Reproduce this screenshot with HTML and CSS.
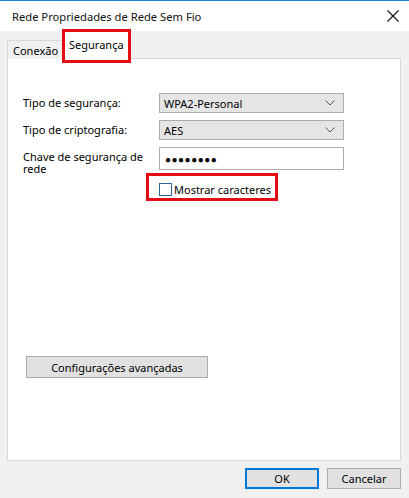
FILE: index.html
```html
<!DOCTYPE html>
<html lang="pt">
<head>
<meta charset="utf-8">
<link rel="stylesheet" href="styles.css">
</head>
<body>
<div class="window">
  <div class="titlebar">
    <span class="title">Rede Propriedades de Rede Sem Fio</span>
    <svg class="close" width="12" height="12" viewBox="0 0 12 12"><path d="M0.5 0.5 L11.5 11.5 M11.5 0.5 L0.5 11.5" stroke="#111" stroke-width="1.1" fill="none"/></svg>
  </div>
  <div class="content">
    <div class="tabs">
      <div class="tab">Conexão</div>
      <div class="tab active">Segurança<span class="highlight hl-tab"></span></div>
    </div>
    <div class="panel">
      <div class="form">
        <label class="lbl">Tipo de segurança:</label>
        <div class="select"><span>WPA2-Personal</span><svg width="10" height="6" viewBox="0 0 10 6"><path d="M0.5 0.5 L5 5 L9.5 0.5" stroke="#555" fill="none"/></svg></div>
        <label class="lbl">Tipo de criptografia:</label>
        <div class="select"><span>AES</span><svg width="10" height="6" viewBox="0 0 10 6"><path d="M0.5 0.5 L5 5 L9.5 0.5" stroke="#555" fill="none"/></svg></div>
        <label class="lbl multi">Chave de segurança de rede</label>
        <div class="input">●●●●●●●●</div>
        <div></div>
        <div class="check-row">
          <span class="checkbox"></span><span>Mostrar caracteres</span>
          <span class="highlight hl-check"></span>
        </div>
      </div>
      <button class="btn adv">Configurações avançadas</button>
    </div>
    <div class="footer">
      <button class="btn ok">OK</button>
      <button class="btn">Cancelar</button>
    </div>
  </div>
</div>
</body>
</html>
```
FILE: styles.css
```css
* { box-sizing: border-box; }
html, body { margin: 0; padding: 0; }
body {
  width: 409px;
  height: 498px;
  background: #f0f0f0;
  font-family: "Noto Sans", "Open Sans", sans-serif;
  font-size: 11px;
  color: #000;
  overflow: hidden;
}
.titlebar {
  height: 31px;
  border-top: 1px solid #1c80d6;
  background: #fff;
  display: flex;
  align-items: center;
  justify-content: space-between;
  padding: 0 10px 0 12px;
}
.title { font-size: 11.2px; color: #111; }
.close { margin-top: -1px; }
.content { padding: 0 8px 0 7px; }
.tabs {
  display: flex;
  align-items: flex-end;
  height: 27px;
  position: relative;
  z-index: 2;
}
.tab {
  height: 19px;
  padding: 0 5px 0 5px;
  border: 1px solid #d9d9d9;
  border-bottom: none;
  background: #f0f0f0;
  display: flex;
  align-items: center;
  margin-bottom: -1px;
}
.tab.active {
  background: #fff;
  height: 28px;
  padding: 0 5px 2px 5px;
  margin-left: -1px;
  position: relative;
  z-index: 3;
}
.highlight {
  position: absolute;
  border: 3px solid #e30e14;
  pointer-events: none;
}
.hl-tab { left: -2px; top: -3px; right: -2px; bottom: -4px; }
.panel {
  position: relative;
  background: #fff;
  border: 1px solid #d9d9d9;
  height: 403px;
  padding: 34px 15px 0 15px;
}
.form {
  display: grid;
  grid-template-columns: 136px 185px;
  row-gap: 7px;
  align-items: start;
}
.lbl { line-height: 20px; }
.lbl.multi { line-height: 12px; padding-top: 4px; width: 125px; }
.select {
  height: 20px;
  background: #e5e5e5;
  border: 1px solid #adadad;
  display: flex;
  align-items: center;
  justify-content: space-between;
  padding: 0 8px 0 4px;
}
.input {
  height: 23px;
  border: 1px solid #adadad;
  background: #fff;
  padding: 0 5px;
  display: flex;
  align-items: center;
  font-size: 10px;
  letter-spacing: 0.5px;
}
.check-row {
  position: relative;
  display: flex;
  align-items: center;
  margin-top: -1px;
  height: 16px;
}
.checkbox {
  width: 13px;
  height: 13px;
  border: 1px solid #2f6296;
  background: #fff;
  margin-right: 2px;
}
.hl-check { left: -13px; top: -8px; width: 132px; height: 28px; }
.btn {
  font-family: inherit;
  font-size: 11px;
  color: #000;
  background: #e1e1e1;
  border: 1px solid #adadad;
  height: 22px;
  padding: 0;
  border-radius: 0;
}
.adv { display: block; width: 182px; margin: 159px 0 0 3px; }
.footer {
  display: flex;
  justify-content: flex-end;
  gap: 8px;
  padding-top: 7px;
}
.footer .btn { width: 74px; height: 21px; }
.ok { border: 2px solid #0078d7; }
```
